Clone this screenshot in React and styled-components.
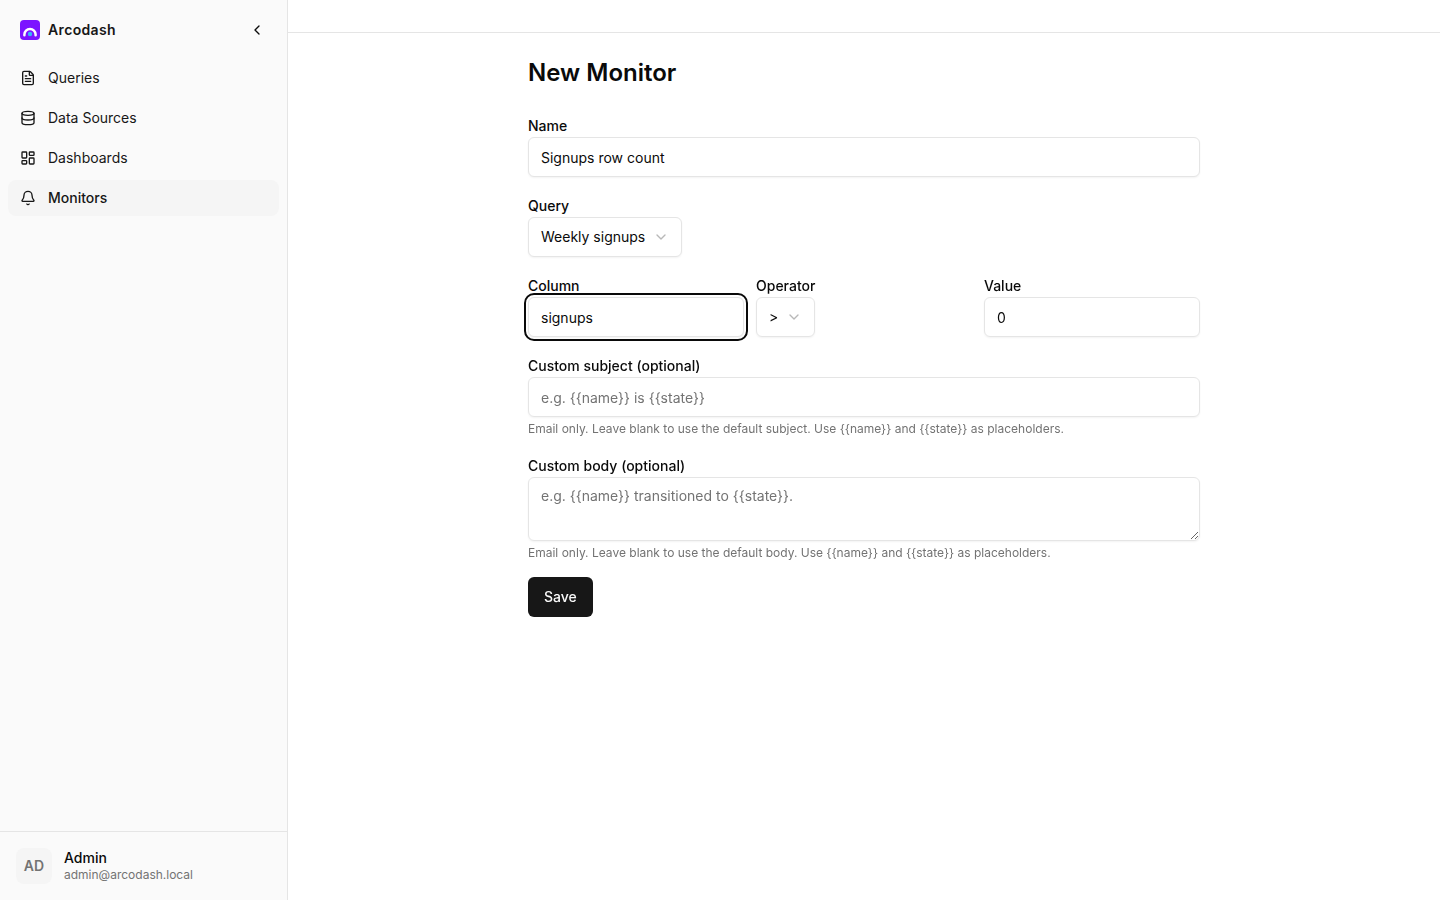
import React, { useState, useEffect, useRef } from "react";
import styled, { createGlobalStyle, css } from "styled-components";
import { FileText, Database, LayoutDashboard, Bell, ChevronLeft, ChevronDown } from "lucide-react";

const GlobalStyle = createGlobalStyle`
  *, *::before, *::after {
    box-sizing: border-box;
  }
  body {
    margin: 0;
    font-family: Inter, "Liberation Sans", sans-serif;
    font-size: 16px;
    line-height: 24px;
    color: #0a0a0a;
    background-color: #ffffff;
  }
  input, textarea, button {
    font-family: inherit;
    letter-spacing: inherit;
  }
`;

const Layout = styled.div`
  display: flex;
  height: 100vh;
`;

const Sidebar = styled.aside`
  display: flex;
  flex-direction: column;
  flex: 0 0 288px;
  background-color: #fafafa;
  border-right: 1px solid #e5e5e5;
`;

const SidebarHeader = styled.div`
  display: flex;
  align-items: center;
  height: 60px;
  padding: 0 14px 0 20px;
`;

const Brand = styled.span`
  flex: 1;
  margin-left: 8px;
  font-size: 14px;
  font-weight: 600;
  line-height: 20px;
  letter-spacing: 0.025em;
  color: #171717;
`;

const CollapseButton = styled.button`
  display: flex;
  align-items: center;
  justify-content: center;
  width: 32px;
  height: 32px;
  padding: 0;
  border: 0;
  border-radius: 6px;
  background: transparent;
  color: #0a0a0a;
  cursor: pointer;
`;

const Nav = styled.nav`
  display: flex;
  flex: 1;
  flex-direction: column;
  gap: 4px;
  padding: 0 8px;
`;

const NavItem = styled.a`
  display: flex;
  align-items: center;
  gap: 12px;
  height: 36px;
  padding: 0 12px;
  border-radius: 8px;
  font-size: 14px;
  line-height: 20px;
  font-weight: ${({ $active }) => ($active ? 500 : 400)};
  background-color: ${({ $active }) => ($active ? "#f5f5f5" : "transparent")};
  color: #171717;
  cursor: pointer;
`;

const Account = styled.div`
  display: flex;
  align-items: center;
  gap: 12px;
  padding: 16px;
  border-top: 1px solid #e5e5e5;
`;

const Avatar = styled.div`
  display: flex;
  align-items: center;
  justify-content: center;
  width: 36px;
  height: 36px;
  border-radius: 8px;
  font-size: 14px;
  font-weight: 600;
  background-color: #f5f5f5;
  color: #737373;
`;

const AccountText = styled.div`
  display: flex;
  flex-direction: column;
`;

const AccountName = styled.span`
  font-size: 14px;
  font-weight: 500;
  line-height: 1.25;
`;

const AccountEmail = styled.span`
  font-size: 12px;
  line-height: 16px;
  color: #737373;
`;

const Content = styled.div`
  display: flex;
  flex: 1;
  flex-direction: column;
`;

const TopBar = styled.header`
  height: 33px;
  border-bottom: 1px solid #e5e5e5;
`;

const Main = styled.main`
  width: 672px;
  margin: 0 auto;
  padding-top: 24px;
`;

const Title = styled.h1`
  margin: 0 0 24px;
  font-size: 24px;
  font-weight: 600;
  line-height: 32px;
`;

const Form = styled.form`
  display: flex;
  flex-direction: column;
  align-items: stretch;
  gap: 16px;
`;

const Columns = styled.div`
  display: grid;
  grid-template-columns: repeat(3, 1fr);
  gap: 12px;
`;

const Field = styled.div`
  display: flex;
  flex-direction: column;
  align-items: flex-start;
`;

const LabelRow = styled.div`
  height: 24px;
`;

const Label = styled.label`
  font-size: 14px;
  font-weight: 500;
  line-height: 20px;
`;

const control = css`
  border: 1px solid #e5e5e5;
  border-radius: 6px;
  background-color: #ffffff;
  box-shadow: 0 1px 2px 0 rgba(0, 0, 0, 0.05);
  font-size: 14px;
  line-height: 20px;
  color: #0a0a0a;
`;

const Input = styled.input`
  ${control}
  width: 100%;
  height: 40px;
  padding: 8px 12px;
  caret-color: transparent;
  &::placeholder {
    color: #737373;
  }
  &:focus {
    outline: 2px solid #0a0a0a;
    outline-offset: 2px;
  }
`;

const TextArea = styled.textarea`
  ${control}
  display: block;
  width: 100%;
  height: 64px;
  padding: 8px 12px;
  resize: vertical;
  &::placeholder {
    color: #737373;
  }
`;

const SelectButton = styled.button`
  ${control}
  display: flex;
  align-items: center;
  gap: 8px;
  height: 40px;
  padding: 0 12px;
  cursor: pointer;
  svg {
    opacity: 0.5;
    color: #737373;
  }
`;

const Hint = styled.p`
  margin: 4px 0 0;
  font-size: 12px;
  line-height: 16px;
  color: #737373;
`;

const SaveButton = styled.button`
  align-self: flex-start;
  height: 40px;
  padding: 0 16px;
  border: 0;
  border-radius: 6px;
  font-size: 14px;
  font-weight: 500;
  line-height: 20px;
  background-color: #171717;
  color: #fafafa;
  cursor: pointer;
`;

const navItems = [
  { name: "Queries", icon: FileText },
  { name: "Data Sources", icon: Database },
  { name: "Dashboards", icon: LayoutDashboard },
  { name: "Monitors", icon: Bell },
];

const Logo = () => (
  <svg width="20" height="20" viewBox="0 0 20 20" fill="none">
    <rect width="20" height="20" rx="4" fill="#7c14ff" />
    <path d="M4.4 15.2v-.6a5.6 5.6 0 0 1 11.2 0v.6" stroke="#ffffff" strokeWidth="2.5" strokeLinecap="round" />
    <circle cx="10" cy="14" r="2.2" fill="#38b6f8" />
  </svg>
);

const FormField = ({ label, id, hint, children }) => (
  <Field>
    <LabelRow>
      <Label htmlFor={id}>{label}</Label>
    </LabelRow>
    {children}
    {hint && <Hint>{hint}</Hint>}
  </Field>
);

const MonitorForm = () => {
  const [name, setName] = useState("Signups row count");
  const [column, setColumn] = useState("signups");
  const [value, setValue] = useState("0");
  const [subject, setSubject] = useState("");
  const [body, setBody] = useState("");
  const columnRef = useRef(null);

  useEffect(() => {
    columnRef.current.focus();
  }, []);

  return (
    <Form onSubmit={(e) => e.preventDefault()}>
      <FormField label="Name" id="name">
        <Input id="name" value={name} onChange={(e) => setName(e.target.value)} />
      </FormField>
      <FormField label="Query" id="query">
        <SelectButton type="button" id="query">
          Weekly signups
          <ChevronDown size={16} />
        </SelectButton>
      </FormField>
      <Columns>
        <FormField label="Column" id="column">
          <Input id="column" ref={columnRef} value={column} onChange={(e) => setColumn(e.target.value)} />
        </FormField>
        <FormField label="Operator" id="operator">
          <SelectButton type="button" id="operator">
            &gt;
            <ChevronDown size={16} />
          </SelectButton>
        </FormField>
        <FormField label="Value" id="value">
          <Input id="value" type="number" value={value} onChange={(e) => setValue(e.target.value)} />
        </FormField>
      </Columns>
      <FormField
        label="Custom subject (optional)"
        id="subject"
        hint="Email only. Leave blank to use the default subject. Use {{name}} and {{state}} as placeholders."
      >
        <Input
          id="subject"
          placeholder="e.g. {{name}} is {{state}}"
          value={subject}
          onChange={(e) => setSubject(e.target.value)}
        />
      </FormField>
      <FormField
        label="Custom body (optional)"
        id="body"
        hint="Email only. Leave blank to use the default body. Use {{name}} and {{state}} as placeholders."
      >
        <TextArea
          id="body"
          placeholder="e.g. {{name}} transitioned to {{state}}."
          value={body}
          onChange={(e) => setBody(e.target.value)}
        />
      </FormField>
      <SaveButton type="submit">Save</SaveButton>
    </Form>
  );
};

const App = () => {
  const [active, setActive] = useState("Monitors");

  return (
    <Layout>
      <GlobalStyle />
      <Sidebar>
        <SidebarHeader>
          <Logo />
          <Brand>Arcodash</Brand>
          <CollapseButton aria-label="Collapse sidebar">
            <ChevronLeft size={16} />
          </CollapseButton>
        </SidebarHeader>
        <Nav>
          {navItems.map(({ name, icon: Icon }) => (
            <NavItem key={name} $active={name === active} onClick={() => setActive(name)}>
              <Icon size={16} />
              {name}
            </NavItem>
          ))}
        </Nav>
        <Account>
          <Avatar>AD</Avatar>
          <AccountText>
            <AccountName>Admin</AccountName>
            <AccountEmail>admin@arcodash.local</AccountEmail>
          </AccountText>
        </Account>
      </Sidebar>
      <Content>
        <TopBar />
        <Main>
          <Title>New Monitor</Title>
          <MonitorForm />
        </Main>
      </Content>
    </Layout>
  );
};

export default App;
